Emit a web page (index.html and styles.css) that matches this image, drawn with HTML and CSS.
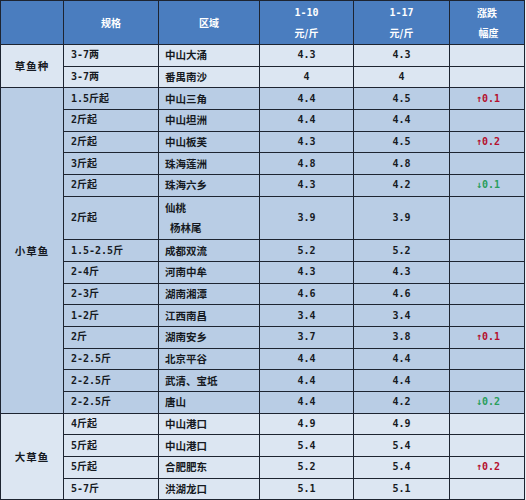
FILE: index.html
```html
<!DOCTYPE html>
<html lang="zh-CN">
<head>
<meta charset="utf-8">
<title>草鱼价格</title>
<link rel="stylesheet" href="styles.css">
</head>
<body>
<table class="price">
  <colgroup>
    <col class="c-cat"><col class="c-spec"><col class="c-area"><col class="c-p1"><col class="c-p2"><col class="c-chg">
  </colgroup>
  <thead>
    <tr class="head">
      <th></th>
      <th>规格</th>
      <th>区域</th>
      <th><span class="num">1-10</span><br>元/斤</th>
      <th><span class="num">1-17</span><br>元/斤</th>
      <th>涨跌<br><span class="shift">幅度</span></th>
    </tr>
  </thead>
  <tbody class="light">
    <tr><td class="cat" rowspan="2">草鱼种</td><td class="spec">3-7两</td><td class="area">中山大涌</td><td class="num">4.3</td><td class="num">4.3</td><td class="chg"></td></tr>
    <tr><td class="spec">3-7两</td><td class="area">番禺南沙</td><td class="num">4</td><td class="num">4</td><td class="chg"></td></tr>
  </tbody>
  <tbody class="mid">
    <tr><td class="cat" rowspan="16">小草鱼</td><td class="spec">1.5斤起</td><td class="area">中山三角</td><td class="num">4.4</td><td class="num">4.5</td><td class="chg up">↑0.1</td></tr>
    <tr><td class="spec">2斤起</td><td class="area">中山坦洲</td><td class="num">4.4</td><td class="num">4.4</td><td class="chg"></td></tr>
    <tr><td class="spec">2斤起</td><td class="area">中山板芙</td><td class="num">4.3</td><td class="num">4.5</td><td class="chg up">↑0.2</td></tr>
    <tr><td class="spec">3斤起</td><td class="area">珠海莲洲</td><td class="num">4.8</td><td class="num">4.8</td><td class="chg"></td></tr>
    <tr><td class="spec">2斤起</td><td class="area">珠海六乡</td><td class="num">4.3</td><td class="num">4.2</td><td class="chg down">↓0.1</td></tr>
    <tr class="tall"><td class="spec">2斤起</td><td class="area">仙桃<br><span class="indent">杨林尾</span></td><td class="num">3.9</td><td class="num">3.9</td><td class="chg"></td></tr>
    <tr><td class="spec">1.5-2.5斤</td><td class="area">成都双流</td><td class="num">5.2</td><td class="num">5.2</td><td class="chg"></td></tr>
    <tr><td class="spec">2-4斤</td><td class="area">河南中牟</td><td class="num">4.3</td><td class="num">4.3</td><td class="chg"></td></tr>
    <tr><td class="spec">2-3斤</td><td class="area">湖南湘潭</td><td class="num">4.6</td><td class="num">4.6</td><td class="chg"></td></tr>
    <tr><td class="spec">1-2斤</td><td class="area">江西南昌</td><td class="num">3.4</td><td class="num">3.4</td><td class="chg"></td></tr>
    <tr><td class="spec">2斤</td><td class="area">湖南安乡</td><td class="num">3.7</td><td class="num">3.8</td><td class="chg up">↑0.1</td></tr>
    <tr><td class="spec">2-2.5斤</td><td class="area">北京平谷</td><td class="num">4.4</td><td class="num">4.4</td><td class="chg"></td></tr>
    <tr><td class="spec">2-2.5斤</td><td class="area">武清、宝坻</td><td class="num">4.4</td><td class="num">4.4</td><td class="chg"></td></tr>
    <tr><td class="spec">2-2.5斤</td><td class="area">唐山</td><td class="num">4.4</td><td class="num">4.2</td><td class="chg down">↓0.2</td></tr>
  </tbody>
  <tbody class="light">
    <tr><td class="cat" rowspan="4">大草鱼</td><td class="spec">4斤起</td><td class="area">中山港口</td><td class="num">4.9</td><td class="num">4.9</td><td class="chg"></td></tr>
    <tr><td class="spec">5斤起</td><td class="area">中山港口</td><td class="num">5.4</td><td class="num">5.4</td><td class="chg"></td></tr>
    <tr><td class="spec">5斤起</td><td class="area">合肥肥东</td><td class="num">5.2</td><td class="num">5.4</td><td class="chg up">↑0.2</td></tr>
    <tr><td class="spec">5-7斤</td><td class="area">洪湖龙口</td><td class="num">5.1</td><td class="num">5.1</td><td class="chg"></td></tr>
  </tbody>
</table>
</body>
</html>
```

FILE: styles.css
```css
html, body {
  margin: 0;
  padding: 0;
}
body {
  background: #e9edf2;
  width: 526px;
  height: 500px;
  overflow: hidden;
  font-family: "DejaVu Sans Mono", "Noto Sans CJK SC", monospace;
  font-size: 10px;
  font-weight: bold;
  color: #161a22;
}
.price {
  border-collapse: collapse;
  table-layout: fixed;
  width: 524px;
  border: 1px solid #1d2431;
}
.c-cat { width: 63px; }
.c-spec { width: 95px; }
.c-area { width: 101px; }
.c-p1 { width: 94px; }
.c-p2 { width: 96px; }
.c-chg { width: 75px; }

.price th,
.price td {
  border: 1px solid #1d2431;
  padding: 0;
  line-height: 20px;
  vertical-align: middle;
  white-space: nowrap;
  overflow: hidden;
}
.head {
  height: 44px;
}
.head th {
  background: #4a7dbf;
  color: #ffffff;
  text-align: center;
  font-weight: bold;
  font-family: "Noto Sans CJK SC", sans-serif;
  font-size: 10px;
}
.head th .num {
  font-family: "DejaVu Sans Mono", "Noto Sans CJK SC", monospace;
}
.head th .shift {
  padding-left: 3px;
}
.price tbody tr {
  height: 21.7px;
}
.price tbody tr.tall {
  height: 43.4px;
}
.light td {
  background: #dce6f2;
}
.mid td {
  background: #b9cde5;
}
.cat {
  text-align: center;
  letter-spacing: 1px;
  font-family: "Noto Sans CJK SC", sans-serif;
  font-size: 10.5px;
}
.spec {
  text-align: left;
  padding-left: 7px !important;
}
.area {
  text-align: left;
  padding-left: 6px !important;
  font-family: "Noto Sans CJK SC", sans-serif;
  font-size: 10.5px;
}
.area .indent {
  padding-left: 5px;
}
td.num {
  text-align: center;
}
.chg {
  text-align: center;
  font-weight: bold;
  padding-left: 2px !important;
}
.chg.up {
  color: #b5102e;
}
.chg.down {
  color: #2a9e5c;
}
```
